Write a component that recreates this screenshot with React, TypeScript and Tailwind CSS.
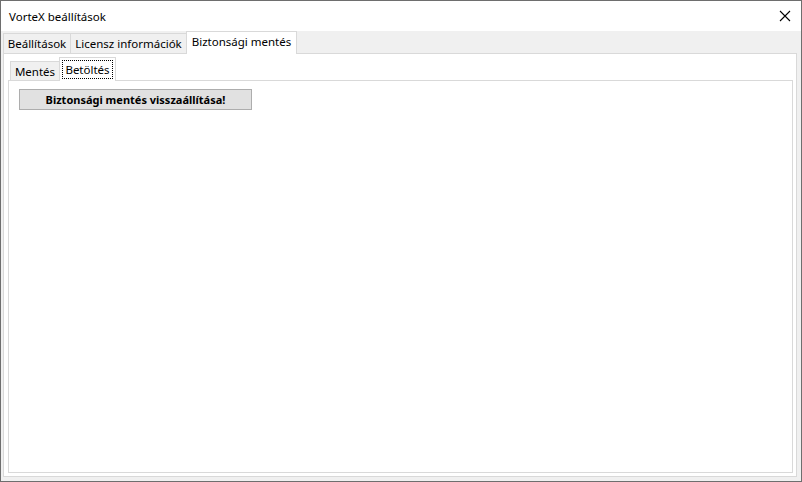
import React from "react";

export default function App() {
  const font = { fontFamily: '"Noto Sans", "Open Sans", sans-serif' };
  return (
    <div
      className="w-[802px] h-[482px] border border-[#6e6e6e] bg-[#f0f0f0] flex flex-col text-[11px] text-black overflow-hidden"
      style={font}
    >
      {/* Title bar */}
      <div className="h-[30px] bg-white flex items-center justify-between pl-[8px] pr-[10px] shrink-0">
        <span className="leading-none text-[11.5px] pt-[1px]">VorteX beállítások</span>
        <svg width="12" height="12" viewBox="0 0 12 12">
          <path d="M1 1 L11 11 M11 1 L1 11" stroke="#000" strokeWidth="1.1" />
        </svg>
      </div>
      {/* Outer tab strip */}
      <div className="h-[22px] flex items-end pl-[2px] shrink-0">
        <div className="w-[68px] h-[20px] border-x border-t border-[#d9d9d9] flex items-center justify-center leading-none text-[11.5px]">
          Beállítások
        </div>
        <div className="-ml-px w-[117px] h-[20px] border-x border-t border-[#d9d9d9] flex items-center justify-center leading-none text-[11.5px]">
          Licensz információk
        </div>
        <div className="-ml-px w-[111px] h-[23px] -mb-px relative z-10 bg-white border-x border-t border-[#d9d9d9] flex items-center justify-center leading-none pb-[2px] text-[11.5px]">
          Biztonsági mentés
        </div>
      </div>
      {/* Outer page */}
      <div className="flex-1 ml-[2px] mr-[4px] mb-[4px] border border-[#d9d9d9] bg-white flex flex-col pt-[3px] pl-[4px] pr-[3px] pb-[3px]">
        {/* Inner tab strip */}
        <div className="h-[23px] flex items-end pl-[2px] shrink-0">
          <div className="w-[50px] h-[19px] border-x border-t border-[#d9d9d9] bg-[#f0f0f0] flex items-center justify-center leading-none pt-[1px] text-[11.5px]">
            Mentés
          </div>
          <div className="-ml-px w-[57px] h-[24px] -mb-px relative z-10 bg-white border-x border-t border-[#d9d9d9] flex items-start pt-[2px] pl-[2px] pr-[2px]">
            <div className="w-full h-[19px] border border-dotted border-black flex items-center justify-center leading-none text-[11.5px]">
              Betöltés
            </div>
          </div>
        </div>
        {/* Inner page */}
        <div className="flex-1 border border-[#d9d9d9] bg-white pt-[8px] pl-[10px]">
          <div className="w-[233px] h-[21px] bg-[#e1e1e1] border border-[#adadad] flex items-center justify-center font-bold leading-none text-[11px]">
            Biztonsági mentés visszaállítása!
          </div>
        </div>
      </div>
    </div>
  );
}
